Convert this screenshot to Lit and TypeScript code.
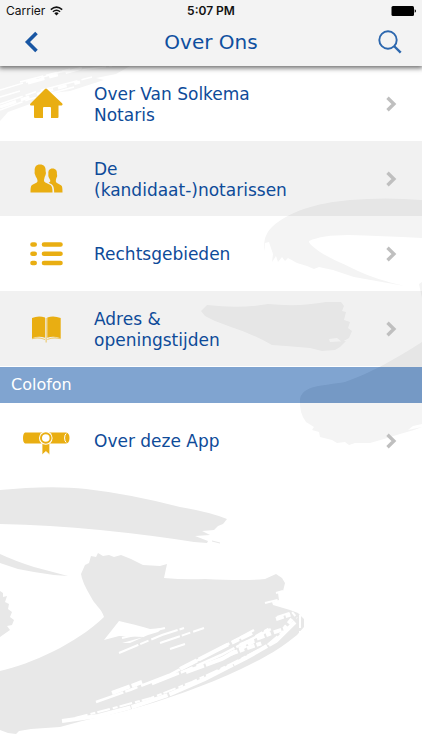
import { LitElement, html, css, svg } from "lit";
import { customElement } from "lit/decorators.js";

const icons = {
  house: svg`<svg viewBox="0 0 48 40" aria-hidden="true"><path d="M24 4.500Q24.500 4.500 25 5L40.300 19.500Q41.200 21.200 39.700 21.500H36.500V33Q36.500 34 35.500 34H29V24Q29 23 28 23H22Q21 23 21 24V34H13Q12 34 12 33V21.500H9Q7.300 21.200 8.300 19.700L23 5Q23.500 4.500 24 4.500Z"/></svg>`,
  people: svg`<svg viewBox="0 0 48 40" aria-hidden="true"><path d="M18 5.500C22 5.500 23.900 8 23.600 12C23.800 13.400 24.300 14 23.500 16C23.200 17 22.800 17.200 22.400 19.200C21.800 21 21.700 22.500 23.400 23.500L28.500 26C30 27 30.500 29 30.500 33.500H8.500C8.500 29.500 8.600 27 10 26L14.800 23.500C16 22.500 15.500 21 14.800 19.200C13.800 18 13.600 17 13.200 16C12.200 14 12.700 13.400 12.700 12C12.500 8 14 5.500 18 5.500Z"/><path d="M30.500 9.500C33.800 9.500 35.200 11.800 34.900 15C35.500 17 35 18 34.300 19.200C33.700 21.500 33.400 23 35 24L39 26.300C40.300 27.200 40.500 29 40.500 33.500H32.200C32.100 29 31.600 26.400 29 25L26.600 23.700C28.700 23 28.700 21.500 27.500 19.700C26.500 18 26.100 17 26.400 15C26.100 11.800 27.200 9.500 30.500 9.500Z"/></svg>`,
  list: svg`<svg viewBox="0 0 48 40" aria-hidden="true"><path fill="none" stroke="currentColor" stroke-width="4.600" stroke-linecap="round" d="M10.500 10.500H12.700M22 10.500H38.500M10.500 19.800H12.700M22 19.800H38.500M10.500 29H12.700M22 29H38.500"/></svg>`,
  book: svg`<svg viewBox="0 0 48 40" aria-hidden="true"><path d="M10 9Q16.500 6.200 23 8.500V28.800Q16.500 26.600 10 29.300ZM25.300 8.500Q31.500 6.200 38.700 9V29.300Q31.500 26.600 25.300 28.800Z"/><path d="M23.600 9H24.700V33.500H23.600Z" opacity=".6"/><path d="M10 28.800Q16.500 27 23 30V31Q16.500 28.600 10 30.300ZM38.700 28.800Q31.500 27 25.300 30V31Q31.500 28.600 38.700 30.300Z" opacity=".6"/></svg>`,
  diploma: svg`<svg viewBox="0 0 48 40" aria-hidden="true"><path d="M3 11.500H44Q47.500 12 47.500 17T44 22.500H3Q1 21.500 1 17T3 11.500Z"/><path d="M44.300 12.500Q42.600 13.500 42.600 17T44.300 21.500" fill="none" stroke="#fff" stroke-width="1"/><path d="M20 21H27.800V34L23.900 30.500 20 34Z" stroke="#fff" stroke-width=".8"/><circle cx="23.800" cy="17" r="6.800" fill="#fff"/><circle cx="23.800" cy="17" r="4.800" fill="none" stroke="currentColor" stroke-width="2"/></svg>`,
};

type Entry = { label: unknown; icon: keyof typeof icons };

const mainEntries: Entry[] = [
  { label: "Over Van Solkema Notaris", icon: "house" },
  { label: html`De<br />(kandidaat-)notarissen`, icon: "people" },
  { label: "Rechtsgebieden", icon: "list" },
  { label: html`Adres &amp;<br />openingstijden`, icon: "book" },
];
const colophonEntries: Entry[] = [{ label: "Over deze App", icon: "diploma" }];

/** Grey brush strokes that lie behind the whole page. */
@customElement("brush-backdrop")
class BrushBackdrop extends LitElement {
  static styles = css`
    :host { display: block; }
    svg { display: block; width: 100%; }
    .ink { fill: #e8e8e8; }
    .dry { fill: none; stroke: #e8e8e8; }
    .gap { fill: none; stroke: #fff; }
  `;
  render() {
    return html`<svg viewBox="0 0 422 750" aria-hidden="true">
      <path class="ink" d="M0 66H130L116 74 96 78 104 80 70 91 52 93 30 104 8 112 0 121Z"/>
      <path class="gap" stroke-width="1.500" stroke-dasharray="24 3 11 5 38 4" d="M0 90 60 72 112 66M0 104 38 91 92 77M0 110 30 99 74 87M20 82 70 69M0 97 20 91"/>
      <path class="gap" stroke-width="3" stroke-dasharray="17 5 9 8" d="M0 107 44 92 80 82M28 83 82 68"/>
      <path class="ink" d="M422 200Q385 197 350 200C315 203 288 212 272 227C265 234 263 242 265 251L265 243 269 242 273 254 272 262 276 256 278 262 282 257 285 261 288 258 297 263 307 266 314 269 319 267 333 270 354 277 382 282 405 286Q377 280 358 271C342 263 324 256 316 249Q308 243 309 241Q322 235 348 235Q382 236 422 238Z"/>
      <path class="ink" d="M422 282 419 284 422 298Z"/>
      <path class="ink" d="M201 311 207 305Q240 309 268 304Q299 307 326 302L341 302 344 306 342 311 346 312 344 320 350 322 348 328 352 331 349 338 342 342 337 338 329 339 330 342 346 341 340 347 335 350 322 351 310 348 286 346 272 345Q253 334 231 327L215 321 205 316Z"/>
      <path class="ink" d="M422 342C397 358 371 373 345 382C322 386 303 385 300 399Q299 413 306 422L314 427 312 430 319 432 320 437 332 440 337 443 345 442 349 445 355 443 370 443 384 439 400 434 414 430 422 427 408 430 413 426 422 424Z"/>
      <path class="ink" d="M0 490 26 488Q60 486 86 489Q130 494 180 507Q210 512 227 519L223 524 218 526 214 530 202 531 210 535 195 536 208 541 207 543 194 542Q150 535 100 530 50 525 0 524Z"/>
      <path class="dry" stroke-width="1" d="M212 541 220 543"/>
      <path class="ink" d="M0 554Q15 561 34 567L68 576Q50 575 34 572L18 569 0 563Z"/>
      <path class="ink" d="M0 591 3 593 3 597 7 596 5 602 9 604 8 609 12 612 10 617 14 620 12 625 7 626 10 630 0 637Z"/>
      <path class="ink" d="M81 574 85 565 89 563 91 556 96 557 98 553 103 556 109 555 114 557 121 555 131 559 143 565 160 566 167 564 164 578Q185 580 205 579 245 581 265 579L276 574 282 578 285 583 283 591 278 593 279 600 272 602 273 605 290 610 298 613 304 619 304 627 297 635 288 642C278 650 260 660 241 669C205 686 165 700 125 711L82 721 60 727 31 729 19 731 16 734 8 733 0 730V671C31 664 76 644 104 617C102 609 94 604 91 597Q82 582 81 574Z"/>
      <path fill="#fff" d="M104 640 119 621Q133 624 150 629L163 628 158 632 148 635 130 643 122 643 144 637 119 636Z"/>
      <path class="gap" stroke-width="2" stroke-dasharray="21 2 9 3 28 2" d="M119 653 138 645 162 635 184 628M160 643 204 628M170 649 185 644M122 638 165 628"/>
      <path class="gap" stroke-width="2.500" stroke-dasharray="29 2 13 4 42 2 7 3" d="M96 702 130 690 169 675 210 654 254 630M152 684 187 670 221 655 271 629"/>
      <path class="gap" stroke-width="4" stroke-dasharray="19 2 33 4 8 2" d="M112 693 142 682M180 669 225 646 252 633M186 672 222 659 254 641"/>
      <path class="gap" stroke-width="4" stroke-dasharray="70 1 38 2" d="M62 721 98 716 132 707 168 695 205 679 246 658 276 641 295 622"/>
      <path class="gap" stroke-width="2" stroke-dasharray="13 3 5 2" d="M75 718 110 709 151 698 192 682 231 664 266 646 286 629M265 603 281 599M276 593 283 591M277 617 292 612 297 618M300 615 300 634"/>
      <path class="gap" stroke-width="4" stroke-dasharray="8 2 5 3" d="M240 645 272 633 284 629 292 619M276 619 292 614M256 637 270 629M230 654 262 643"/>
    </svg>`;
  }
}

/** One tappable line of the menu. */
@customElement("menu-row")
class MenuRow extends LitElement {
  static properties = { entry: { attribute: false } };
  declare entry: Entry;
  static styles = css`
    :host { display: block; }
    .row {
      display: grid;
      grid-template-columns: 48px minmax(0, 192px) 1fr;
      column-gap: 24px;
      align-items: center;
      box-sizing: border-box;
      min-height: 75px;
      padding: 0 25px 0 22px;
      color: #0e4b99;
      font-size: 17px;
      line-height: 21px;
      text-decoration: none;
    }
    .icon { color: #e9ae12; }
    .icon svg { display: block; width: 48px; height: 40px; fill: currentColor; }
    .label { padding-top: 2px; }
    .chevron { justify-self: end; width: 12px; height: 16px; fill: none; stroke: #bfbfbf; stroke-width: 3.4; }
  `;
  render() {
    const { label, icon } = this.entry;
    return html`<a class="row" href="#${icon}">
      <span class="icon">${icons[icon]}</span>
      <span class="label">${label}</span>
      <svg class="chevron" viewBox="0 0 12 16" aria-hidden="true"><path d="M2.500 1.700 8.900 8 2.500 14.300"/></svg>
    </a>`;
  }
}

@customElement("app-root")
class AppRoot extends LitElement {
  static styles = css`
    :host {
      display: block;
      position: relative;
      min-height: 100vh;
      overflow: hidden;
      background: #fff;
      font-family: "DejaVu Sans", Verdana, sans-serif;
    }
    .backdrop { position: absolute; inset: 0; }
    .page { position: relative; }
    header {
      position: relative;
      background: #f3f3f3;
      box-shadow: 0 1px 5px 1px rgba(0, 0, 0, 0.6);
    }
    .status {
      display: grid;
      grid-template-columns: 1fr auto 1fr;
      align-items: center;
      height: 22px;
      padding: 0 6px;
      font: 12px/22px Inter, Roboto, sans-serif;
      color: #111;
    }
    .carrier { display: flex; align-items: center; gap: 5px; }
    .wifi { width: 13px; height: 10px; }
    .time { font-weight: 600; }
    .battery { justify-self: end; width: 25px; height: 10px; }
    .bar {
      display: grid;
      grid-template-columns: 40px 1fr 40px;
      align-items: center;
      height: 40px;
      padding: 0 12px 4px;
    }
    h1 { margin: 0; font-size: 20px; line-height: 40px; font-weight: 400; text-align: center; color: #0e4f9f; }
    button { display: grid; place-items: center; height: 40px; padding: 0; border: 0; background: none; color: #1856a3; }
    button svg { width: 26px; height: 26px; fill: none; stroke: currentColor; }
    .search { color: #2c67ae; }
    ul { margin: 0; padding: 0; list-style: none; }
    li { background: rgba(255, 255, 255, 0.5); }
    li:nth-child(even) { background: rgba(228, 228, 228, 0.5); }
    h2 {
      margin: 1px 0 0;
      padding: 0 11px;
      background: rgba(1, 73, 161, 0.5);
      color: #fff;
      font-size: 16px;
      line-height: 36px;
      font-weight: 400;
    }
  `;

  private rows(entries: Entry[]) {
    return html`<ul>${entries.map((e) => html`<li><menu-row .entry=${e}></menu-row></li>`)}</ul>`;
  }

  render() {
    return html`
      <brush-backdrop class="backdrop"></brush-backdrop>
      <div class="page">
        <header>
          <div class="status">
            <span class="carrier">Carrier
              <svg class="wifi" viewBox="0 0 13 10" aria-hidden="true">
                <path d="M.8 3.600Q6.500-1.300 12.200 3.600M2.900 5.800Q6.500 2.700 10.100 5.800" fill="none" stroke="#111" stroke-width="1.500"/>
                <path d="M4.300 7.200Q6.500 5.400 8.700 7.200L6.500 9.600Z" fill="#111"/>
              </svg>
            </span>
            <span class="time">5:07 PM</span>
            <svg class="battery" viewBox="0 0 25 10" aria-hidden="true">
              <rect x=".5" width="22.500" height="10" rx="1.500"/><path d="M23.700 3.300Q25 3.800 25 5T23.700 6.700Z"/>
            </svg>
          </div>
          <div class="bar">
            <button aria-label="Terug"><svg viewBox="0 0 26 26"><path stroke-width="3.600" d="M17.500 4 8.500 13 17.500 22"/></svg></button>
            <h1>Over Ons</h1>
            <button class="search" aria-label="Zoeken"><svg viewBox="0 0 26 26"><circle cx="11" cy="11" r="8.700" stroke-width="1.900"/><path stroke-width="2.400" d="M17 17 23.700 23.700"/></svg></button>
          </div>
        </header>
        <nav>
          ${this.rows(mainEntries)}
          <h2>Colofon</h2>
          ${this.rows(colophonEntries)}
        </nav>
      </div>
    `;
  }
}
